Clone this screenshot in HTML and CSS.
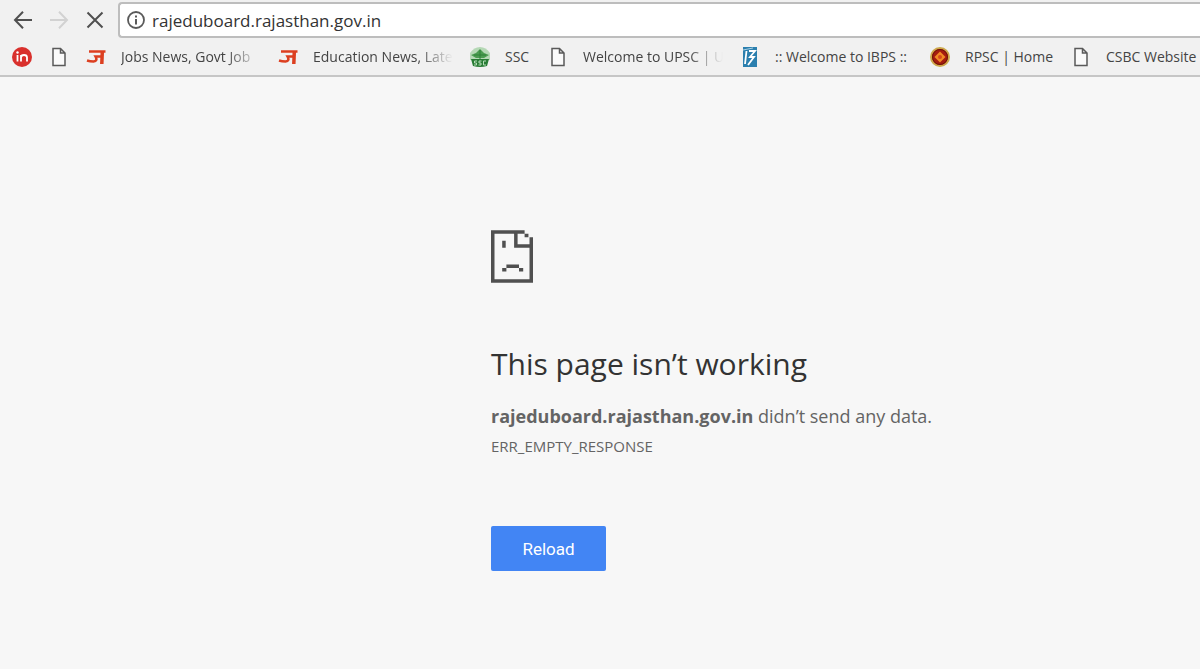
FILE: index.html
```html
<!DOCTYPE html>
<html lang="en">
  <head>
    <meta charset="utf-8">
    <meta name="viewport" content="width=device-width, initial-scale=1.0">
    <title>rajeduboard.rajasthan.gov.in</title>
    <link rel="stylesheet" href="styles.css">
  </head>
  <body>
    <svg class="defs" width="0" height="0" aria-hidden="true">
      <symbol id="file" viewBox="0 0 20 20">
        <path d="M4 1.500H11.500L16 6V18.500H4Z M11.500 1.500V6H16" fill="#fafafa" stroke="#5a5a5a" stroke-width="1.500"/>
      </symbol>
      <symbol id="jagran" viewBox="0 0 20 20">
        <path d="M3 4.500H19.500" stroke-width="2.500"/>
        <path d="M16.300 4.500L15.800 17" stroke-width="3.500"/>
        <path d="M16 9.500H9.500Q12 14 7.500 14.500Q4 14.500 1 13.500" stroke-width="2.500"/>
      </symbol>
    </svg>
    <header>
      <div class="toolbar">
        <nav>
          <button type="button" aria-label="Back">
            <svg viewBox="0 0 20 20"><path d="M19 10H2.500M10 1.800L2 10L10 18.200" stroke="#505050"/></svg>
          </button>
          <button type="button" aria-label="Forward" disabled>
            <svg viewBox="0 0 20 20"><path d="M1 10H17.500M10 1.800L18 10L10 18.200" stroke="#d2d2d2"/></svg>
          </button>
          <button type="button" aria-label="Stop">
            <svg viewBox="0 0 20 20"><path d="M2.500 2.500L17.500 17.500M17.500 2.500L2.500 17.500" stroke="#505050"/></svg>
          </button>
        </nav>
        <div class="address">
          <svg viewBox="0 0 20 20" aria-hidden="true">
            <circle cx="10" cy="10" r="8" fill="none" stroke="#5a5a5a" stroke-width="1.800"/>
            <path d="M10 9V14.500M10 5.500V7.500" stroke="#5a5a5a" stroke-width="2"/>
          </svg>
          <input type="text" aria-label="Address" value="rajeduboard.rajasthan.gov.in">
        </div>
      </div>
      <div class="bookmarks">
        <a href="#" aria-label="in">
          <svg viewBox="0 0 20 20">
            <circle cx="10" cy="10" r="10" fill="#d9302c"/>
            <circle cx="5.500" cy="5.500" r="1.200" fill="#fff"/>
            <path d="M5.500 8V14.500M9 14.500V8M9 10.500Q9 8 12 8T15 10.500V14.500" fill="none" stroke="#fff" stroke-width="1.800"/>
          </svg>
        </a>
        <a href="#" aria-label="Untitled"><svg viewBox="0 0 20 20"><use href="#file"/></svg></a>
        <a href="#">
          <svg class="jagran" viewBox="0 0 20 20"><use href="#jagran"/></svg>
          <span class="label long">Jobs News, Govt Job</span>
        </a>
        <a href="#">
          <svg class="jagran" viewBox="0 0 20 20"><use href="#jagran"/></svg>
          <span class="label long">Education News, Late</span>
        </a>
        <a href="#">
          <svg viewBox="0 0 20 20">
            <path d="M0 13V6Q4 0 10 0T20 6V13Z" fill="#b5d8b5"/>
            <path d="M10 2L14 6L19 8L14 11H6L1 8L6 6Z" fill="#4a9c50"/>
            <path d="M10 3V13M4 8H16" stroke="#2f8038" stroke-width="1"/>
            <path d="M1 12H19L17 19Q10 21 3 19Z" fill="#287c35"/>
            <path d="M7 14H4.500V16H6.500V18H4M11.500 14H9V16H11V18H8.500M16 14H13.500V18H16" fill="none" stroke="#b5dcb8" stroke-width="1"/>
          </svg>
          <span class="label short">SSC</span>
        </a>
        <a href="#">
          <svg viewBox="0 0 20 20"><use href="#file"/></svg>
          <span class="label long">Welcome to UPSC | U</span>
        </a>
        <a href="#">
          <svg viewBox="0 0 20 20">
            <path d="M3 0H17V20H3Z" fill="#2b7fae"/>
            <path d="M6.500 4L5 17M9 4H15L10 10H14L8 18" fill="none" stroke="#fff" stroke-width="1.800"/>
            <path d="M3 3L13 1" stroke="#a9d0e4" stroke-width="1"/>
          </svg>
          <span class="label full">:: Welcome to IBPS ::</span>
        </a>
        <a href="#">
          <svg viewBox="0 0 20 20">
            <circle cx="10" cy="10" r="9" fill="#a51c10" stroke="#cda84b" stroke-width="2"/>
            <circle cx="10" cy="10" r="7.500" fill="none" stroke="#6d1509" stroke-width="1"/>
            <path d="M10 4.500L15.500 10L10 15.500L4.500 10Z" fill="#f18a25"/>
            <circle cx="10" cy="10" r="2" fill="#d64a1c"/>
          </svg>
          <span class="label medium">RPSC | Home</span>
        </a>
        <a href="#">
          <svg viewBox="0 0 20 20"><use href="#file"/></svg>
          <span class="label">CSBC Website</span>
        </a>
      </div>
    </header>
    <main>
      <svg class="sad" viewBox="0 0 12 15" aria-hidden="true">
        <path d="M0 0H9.600V1H10.700V2H12V15H0ZM1 1V14H11V5H6.600V1ZM7.600 1V4H11V2H9.600V1Z" fill-rule="evenodd"/>
        <path d="M3.200 3H4.200V5H3.200ZM4.400 9.800H8V10.800H4.400ZM3.200 10.800H4.400V11.800H3.200ZM8 10.800H9.200V11.800H8Z"/>
      </svg>
      <h1>This page isn’t working</h1>
      <p class="reason"><strong>rajeduboard.rajasthan.gov.in</strong> didn’t send any data.</p>
      <p class="code">ERR_EMPTY_RESPONSE</p>
      <button type="button" class="reload">Reload</button>
    </main>
  </body>
</html>
```
FILE: styles.css
```css
*,*::before,*::after {
  box-sizing: border-box;
}

body {
  margin: 0;
  background: #f7f7f7;
  font-family: "Open Sans", "Noto Sans", sans-serif;
  overflow-x: hidden;
}

h1, p {
  margin: 0;
}

button {
  border: none;
  padding: 0;
  background: none;
}

svg {
  display: block;
  flex-shrink: 0;
}

.defs {
  position: absolute;
}

header {
  background: #f1f1f1;
  border-bottom: 2px solid #c6c6c6;
  overflow: hidden;
}

.toolbar {
  display: flex;
  align-items: center;
  padding-top: 2px;
}

nav {
  display: flex;
  gap: 16px;
  padding: 0 13px;
}

nav svg {
  width: 20px;
  height: 20px;
  fill: none;
  stroke-width: 2;
}

.address {
  flex: 1;
  display: flex;
  align-items: center;
  gap: 6px;
  height: 36px;
  padding-left: 6px;
  background: #fff;
  border: 2px solid #bdbdbd;
  border-right: none;
  border-radius: 4px 0 0 4px;
}

.address svg {
  width: 20px;
  height: 20px;
}

.address input {
  flex: 1;
  border: none;
  outline: none;
  padding: 0;
  background: none;
  font-family: inherit;
  font-size: 17px;
  color: #333;
}

.bookmarks {
  display: flex;
  align-items: center;
  gap: 17px;
  height: 37px;
  padding-left: 12px;
}

.bookmarks a {
  display: flex;
  align-items: center;
  gap: 15px;
  color: #444;
  text-decoration: none;
}

.bookmarks svg {
  width: 20px;
  height: 20px;
}

.jagran {
  fill: none;
  stroke: #dc3f20;
}

.label {
  font-size: 14px;
  line-height: 20px;
  white-space: nowrap;
}

/* long titles fade out at the end */
.long {
  width: 140px;
  -webkit-mask-image: linear-gradient(to right, #000 75%, transparent);
  mask-image: linear-gradient(to right, #000 75%, transparent);
}

.full {
  width: 138px;
}

.medium {
  width: 89px;
}

.short {
  width: 26px;
}

main {
  padding: 153px 20px 40px 491px;
  color: #646464;
}

.sad {
  width: 42px;
  height: 53px;
  fill: #505050;
}

h1 {
  margin-top: 61px;
  font-size: 30px;
  line-height: 40px;
  font-weight: 400;
  color: #333;
}

.reason {
  margin-top: 18px;
  font-size: 18px;
  line-height: 28px;
}

.code {
  margin-top: 6px;
  font-size: 15px;
  line-height: 20px;
}

.reload {
  margin-top: 70px;
  width: 115px;
  height: 45px;
  border-radius: 2px;
  background: #4285f4;
  color: #fff;
  font-family: Roboto, sans-serif;
  font-size: 17px;
}
```
